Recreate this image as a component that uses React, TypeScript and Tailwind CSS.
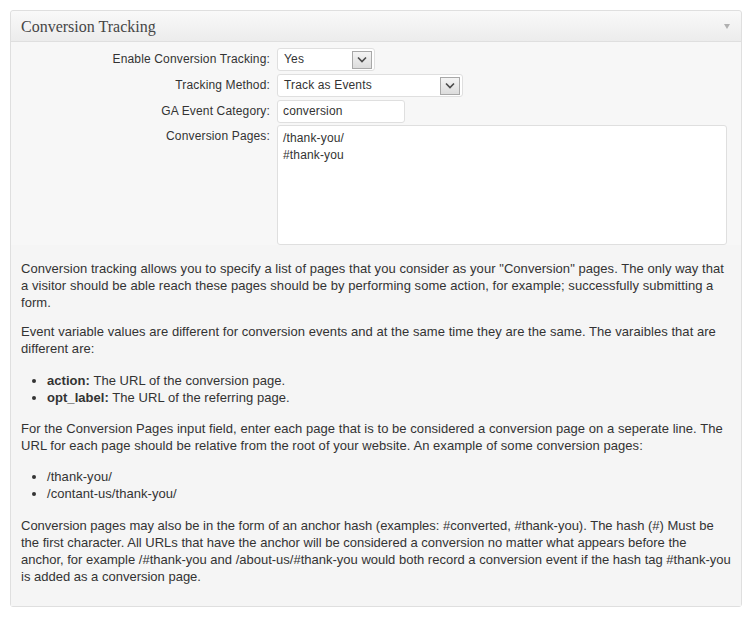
import React from 'react'

const Chevron = () => (
  <span className="flex h-[18px] w-[20px] items-center justify-center border border-[#a8a8a8] bg-gradient-to-b from-[#f4f4f4] to-[#dcdcdc]">
    <svg width="10" height="7" viewBox="0 0 10 7">
      <path d="M1 1.5 L5 5.5 L9 1.5" fill="none" stroke="#4a4a4a" strokeWidth="1.6" />
    </svg>
  </span>
)

const Select = ({ value, width }: { value: string; width: string }) => (
  <div
    className={`flex h-[23px] items-center justify-between rounded-[3px] border border-[#dfdfdf] bg-white pl-[6px] pr-[2px] ${width}`}
  >
    <span>{value}</span>
    <Chevron />
  </div>
)

const App = () => {
  return (
    <div className="min-h-[619px] bg-white p-[10px] font-['Liberation_Sans',Arial,sans-serif] text-[12px] leading-[17px] text-[#333]">
      <div className="w-[732px] rounded-[3px] border border-[#dfdfdf] bg-[#f5f5f5]">
        {/* header */}
        <div className="flex h-[31px] items-center justify-between rounded-t-[3px] border-b border-[#dfdfdf] bg-gradient-to-b from-[#f9f9f9] to-[#ececec] pl-[10px] pr-[11px]">
          <h3 className="font-['Liberation_Serif',Georgia,serif] text-[16px] text-[#464646]">Conversion Tracking</h3>
          <svg width="6" height="5" viewBox="0 0 6 5">
            <path d="M0 0 H6 L3 5 Z" fill="#b0b0b0" />
          </svg>
        </div>

        {/* form */}
        <div className="grid grid-cols-[259px_1fr] gap-x-[7px] gap-y-[3px] bg-[#f7f7f7] pt-[6px] pr-[14px] tracking-[0.15px]">
          <label className="flex h-[23px] items-center justify-end">Enable Conversion Tracking:</label>
          <Select value="Yes" width="w-[98px]" />

          <label className="flex h-[23px] items-center justify-end">Tracking Method:</label>
          <Select value="Track as Events" width="w-[186px]" />

          <label className="flex h-[23px] items-center justify-end">GA Event Category:</label>
          <div className="flex h-[23px] w-[128px] items-center rounded-[3px] border border-[#dfdfdf] bg-white pl-[5px]">
            conversion
          </div>

          <label className="flex justify-end pt-[2px]">Conversion Pages:</label>
          <div className="-mt-[1px] h-[120px] rounded-[3px] border border-[#dfdfdf] bg-white px-[5px] pt-[4px]">
            <div>/thank-you/</div>
            <div>#thank-you</div>
          </div>
        </div>

        {/* description */}
        <div className="bg-[#f5f5f5] px-[10px] pb-[21px] pt-[15px] text-[13px] tracking-[0.05px]">
          <p>
            Conversion tracking allows you to specify a list of pages that you consider as your "Conversion" pages. The only way that a
            visitor should be able reach these pages should be by performing some action, for example; successfully submitting a form.
          </p>
          <p className="mt-3">
            Event variable values are different for conversion events and at the same time they are the same. The varaibles that are
            different are:
          </p>
          <ul className="mt-[15px] list-disc pl-[26px]">
            <li>
              <b>action:</b> The URL of the conversion page.
            </li>
            <li>
              <b>opt_label:</b> The URL of the referring page.
            </li>
          </ul>
          <p className="mt-[14px]">
            For the Conversion Pages input field, enter each page that is to be considered a conversion page on a seperate line. The
            URL for each page should be relative from the root of your website. An example of some conversion pages:
          </p>
          <ul className="mt-[14px] list-disc pl-[26px]">
            <li>/thank-you/</li>
            <li>/contant-us/thank-you/</li>
          </ul>
          <p className="mt-[15px] whitespace-nowrap tracking-[0px]">
            Conversion pages may also be in the form of an anchor hash (examples: #converted, #thank-you). The hash (#) Must be
            <br />
            the first character. All URLs that have the anchor will be considered a conversion no matter what appears before the
            <br />
            anchor, for example /#thank-you and /about-us/#thank-you would both record a conversion event if the hash tag #thank-you
            <br />
            is added as a conversion page.
          </p>
        </div>
      </div>
    </div>
  )
}

export default App
